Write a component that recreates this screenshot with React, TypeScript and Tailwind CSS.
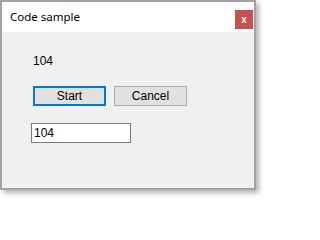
export default function App() {
  return (
    <div className="w-[268px] h-[201px] bg-white">
      <div className="flex flex-col w-[256px] h-[190px] border-2 border-[#a2a2a2] bg-[#f0f0f0] shadow-[3px_3px_5px_rgba(0,0,0,0.3)]">
        <div className="flex flex-row justify-between h-[30px] bg-white">
          <span className="self-center pl-[8px] text-[11.5px] text-black font-['Noto_Sans',sans-serif]">
            Code sample
          </span>
          <div className="flex items-center justify-center mt-[8px] mr-px w-[18px] h-[19px] bg-[#c75050] text-white text-[10px] font-bold leading-none font-['Liberation_Sans',sans-serif]">
            x
          </div>
        </div>

        <div className="flex flex-col items-start pl-[31px] pt-[22px] text-[12px] leading-[14px] text-black font-['Liberation_Sans',Arial,sans-serif]">
          <span>104</span>

          <div className="flex flex-row gap-[8px] mt-[18px]">
            <button className="w-[73px] h-[20px] border-2 border-[#0078d7] bg-[#e1e1e1] leading-none">
              Start
            </button>
            <button className="w-[73px] h-[20px] border border-[#adadad] bg-[#e1e1e1] leading-none">
              Cancel
            </button>
          </div>

          <div className="flex items-center -ml-[2px] mt-[17px] w-[100px] h-[20px] border border-[#7a7a7a] bg-white pl-[2px]">
            104
          </div>
        </div>
      </div>
    </div>
  );
}
